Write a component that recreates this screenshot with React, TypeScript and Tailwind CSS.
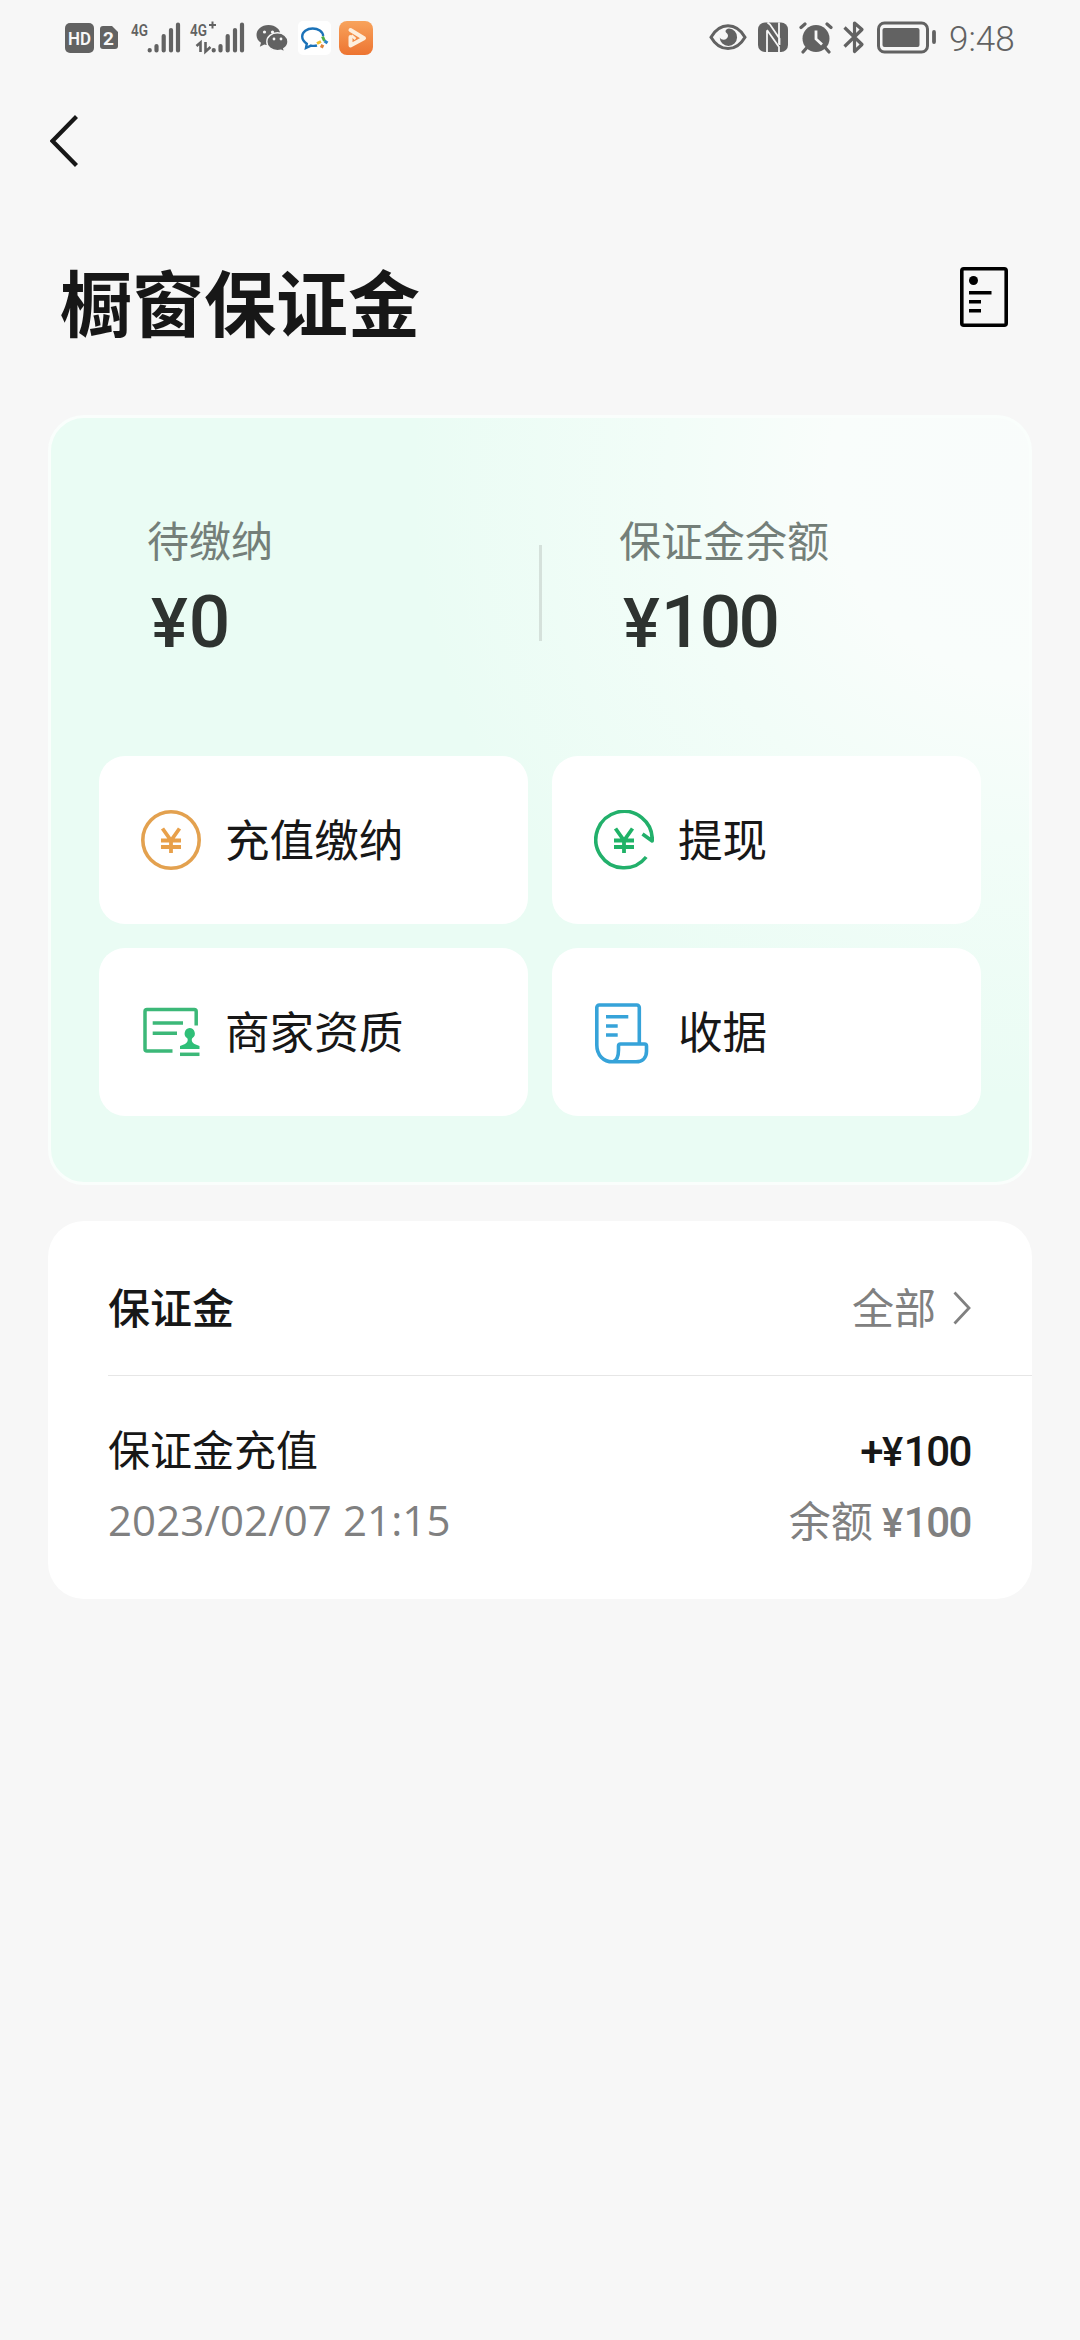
import type { ReactNode } from "react";

type Action = {
  label: string;
  icon: ReactNode;
};

function YuanMark({ color }: { color: string }) {
  return (
    <path
      d="M21.5 18.5 30 30.5 38.5 18.5M20 30.5h20M20 37h20M30 30v13"
      stroke={color}
      strokeWidth="3.8"
    />
  );
}

function RechargeIcon() {
  return (
    <svg className="h-[60px] w-[60px]" viewBox="0 0 60 60" fill="none">
      <circle cx="30" cy="30" r="28.2" stroke="#e3a14f" strokeWidth="3.6" />
      <YuanMark color="#e8a04a" />
    </svg>
  );
}

function WithdrawIcon() {
  return (
    <svg className="h-[60px] w-[60px]" viewBox="0 0 60 60" fill="none">
      <path
        d="M52.2 47A28.2 28.2 0 1 1 58.2 31L48.5 24"
        stroke="#22b06b"
        strokeWidth="3.6"
        strokeLinejoin="round"
      />
      <YuanMark color="#1fb267" />
    </svg>
  );
}

function LicenseIcon() {
  return (
    <svg className="h-[60px] w-[60px]" viewBox="0 0 60 60" fill="none" stroke="#3cb878" strokeWidth="3.5">
      <path d="M55.2 23.5V9.5a2 2 0 0 0-2-2H6a2 2 0 0 0-2 2V47a2 2 0 0 0 2 2h25.5" />
      <path d="M11.7 21H42M11.7 31.3H36" />
      <path
        d="M48.5 26a5.5 5.5 0 0 1 3 10c-1.3 1-1 4.5 2 6l5 2v3H39v-3l5-2c3-1.5 3.3-5 2-6a5.5 5.5 0 0 1 2.5-10Z"
        fill="#2fbf78"
        stroke="none"
      />
      <path d="M39 52.3h19.5" />
    </svg>
  );
}

function ReceiptIcon() {
  return (
    <svg className="h-[60px] w-[60px] overflow-visible" viewBox="0 0 60 60" fill="none" stroke="#36a3d9" strokeWidth="3.6">
      <path d="M45.3 42V5.5a2.5 2.5 0 0 0-2.5-2.5H5.3a2.5 2.5 0 0 0-2.5 2.5V43c0 10 6.5 16.8 16 16.8H42c6.5 0 10.5-4 10.5-10.5V44a2 2 0 0 0-2-2H26.5a2 2 0 0 0-2 2v4c0 6-1.5 10-5 11.5" />
      <path d="M12 14.7h22.3M12 24h11.7M12 33h11.7" />
    </svg>
  );
}

const ACTIONS: Action[] = [
  { label: "充值缴纳", icon: <RechargeIcon /> },
  { label: "提现", icon: <WithdrawIcon /> },
  { label: "商家资质", icon: <LicenseIcon /> },
  { label: "收据", icon: <ReceiptIcon /> },
];

// five rounded bars, 33x34 box
function SignalBars() {
  return (
    <path
      d="M2.2 29.5v-.5M9 29.5v-4.5M16.2 29.5V15M23.5 29.5V9M30.5 29.5V3.5"
      stroke="#626262"
      strokeWidth="4.2"
      strokeLinecap="round"
    />
  );
}

function StatusBar() {
  return (
    <div className="flex h-[76px] items-start pt-[21px] pl-[65px] text-[#626262]">
      <svg className="h-[34px] w-[29px]" viewBox="0 0 29 34">
        <rect y="2" width="29" height="30" rx="5" fill="#626262" />
        <text x="14.5" y="23.5" fontSize="19" fontWeight="600" fill="#f7f7f7" textAnchor="middle" textLength="23" lengthAdjust="spacingAndGlyphs" fontFamily="Roboto, sans-serif">HD</text>
      </svg>
      <svg className="ml-[6px] h-[34px] w-[18px]" viewBox="0 0 18 34">
        <path d="M3 5h9l6 6v14a3 3 0 0 1-3 3H3a3 3 0 0 1-3-3V8a3 3 0 0 1 3-3Z" fill="#626262" />
        <text x="8.5" y="23.5" fontSize="19" fontWeight="700" fill="#f7f7f7" textAnchor="middle" fontFamily="Roboto, sans-serif">2</text>
      </svg>
      <svg className="ml-[11px] h-[34px] w-[51px] overflow-visible" viewBox="-2 0 51 34">
        <text x="0" y="14.5" fontSize="17" fontWeight="600" fill="#626262" textLength="17" lengthAdjust="spacingAndGlyphs" fontFamily="Roboto, sans-serif">4G</text>
        <g transform="translate(16.5 0)"><SignalBars /></g>
      </svg>
      <svg className="ml-[8px] h-[34px] w-[57px] overflow-visible" viewBox="-2 0 57 34">
        <text x="0" y="14.5" fontSize="17" fontWeight="600" fill="#626262" textLength="17" lengthAdjust="spacingAndGlyphs" fontFamily="Roboto, sans-serif">4G</text>
        <path d="M19 4h7M22.5.5v7" stroke="#626262" strokeWidth="2" />
        <path d="M6.5 25l4-3.5v9.5M15.5 21v9.5l5-4.5" fill="none" stroke="#626262" strokeWidth="2.6" />
        <g transform="translate(21.5 0)"><SignalBars /></g>
      </svg>
      <svg className="ml-[11px] h-[34px] w-[33px]" viewBox="0 0 33 34">
        <path d="M12.5 4C5.5 4 .5 8.5.5 14c0 3.2 1.7 6 4.5 7.8l-1.2 4 4.5-2.3c1.3.4 2.8.6 4.2.6 7 0 12-4.5 12-10.1S19.5 4 12.5 4Z" fill="#626262" />
        <path d="M21.5 11.8c-6 0-10.7 3.9-10.7 8.9s4.7 9 10.7 9c1.2 0 2.5-.2 3.6-.5l3.7 1.9-1-3.4c2.6-1.7 4.2-4.2 4.2-7 0-5-4.6-8.9-10.5-8.9Z" fill="#626262" stroke="#f7f7f7" strokeWidth="1.4" />
        <g fill="#f7f7f7">
          <circle cx="8.5" cy="11" r="1.6" />
          <circle cx="16.5" cy="11" r="1.6" />
          <circle cx="18" cy="18" r="1.4" />
          <circle cx="25" cy="18" r="1.4" />
        </g>
      </svg>
      <svg className="ml-[9px] h-[34px] w-[33px]" viewBox="0 0 33 34" fill="none">
        <rect width="33" height="34" rx="5" fill="#fff" />
        <path d="M19 24.5c-1.5.4-3.8.6-6 .1L8 27l.8-4.2C6 20.8 4.2 18.5 4.2 15.5 4.2 10.8 9 7.5 14.7 7.5c5.5 0 10 3 10.5 7.5" stroke="#1b72b8" strokeWidth="2.4" />
        <path d="M24.5 15.5l2 4.5" stroke="#4fae48" strokeWidth="3" />
        <path d="M26.5 20l3 2" stroke="#2a83c8" strokeWidth="3.2" />
        <path d="M25.5 26l-2.8-1.5" stroke="#e0823a" strokeWidth="3.2" />
        <path d="M19 22.5l4-2" stroke="#f0c030" strokeWidth="3" />
      </svg>
      <svg className="ml-[8px] h-[34px] w-[34px]" viewBox="0 0 34 34" fill="none">
        <defs>
          <linearGradient id="video" x1="0" y1="0" x2="0" y2="1">
            <stop offset="0" stopColor="#f8a35c" />
            <stop offset="1" stopColor="#ed7431" />
          </linearGradient>
        </defs>
        <rect width="34" height="34" rx="8" fill="url(#video)" />
        <path d="M11.5 16v8.5L25 17.2 11.5 9" stroke="#fdeedd" strokeWidth="4" strokeLinejoin="round" strokeLinecap="round" />
        <path d="M12.5 14.5l4 3.5" stroke="#fdeedd" strokeWidth="2.5" />
      </svg>

      <svg className="ml-[336px] h-[34px] w-[38px]" viewBox="0 0 38 34" fill="none">
        <path d="M2 16.2C6.5 8.5 12.5 4.8 19 4.8s12.5 3.7 17 11.4c-4.5 7.7-10.5 11.4-17 11.4S6.500 23.900 2 16.200Z" stroke="#626262" strokeWidth="3" />
        <path d="M20 7.5a8.7 8.7 0 1 1-9.3 9c1.500 2.500 5 3 7 1 1-1 1.500-2.300 1.200-3.500-.5-2-2.300-2.200-2.400-3.700 0-1.300 1.500-2.600 3.500-2.800Z" fill="#626262" />
      </svg>
      <svg className="ml-[11px] h-[34px] w-[30px]" viewBox="0 0 30 34" fill="none">
        <rect y="1.5" width="30" height="29.5" rx="7" fill="#626262" />
        <path d="M9 31V9.5M9.5 1.5l2.5 2 9.5 14V24M21 23V1.5M9 9l12 17v5" stroke="#f7f7f7" strokeWidth="1.8" />
      </svg>
      <svg className="ml-[11px] h-[34px] w-[34px]" viewBox="0 0 34 34" fill="none">
        <circle cx="17" cy="17.5" r="13.5" fill="#626262" />
        <path d="M2 6.5 6 3M32 6.5 28 3M7.5 27 4 31M26.5 27l3.5 4" stroke="#626262" strokeWidth="3.2" strokeLinecap="round" />
        <path d="M17 9.5V18l6 5.5" stroke="#f7f7f7" strokeWidth="2.8" />
      </svg>
      <svg className="ml-[10px] h-[34px] w-[22px]" viewBox="0 0 22 34" fill="none">
        <path d="M1.5 6.5 19 23.5l-7.5 7V2l7.5 6.5L1.5 25.5" stroke="#626262" strokeWidth="3.2" strokeLinejoin="round" />
      </svg>
      <svg className="ml-[12px] h-[34px] w-[60px]" viewBox="0 0 60 34" fill="none">
        <rect x="1.5" y="2" width="49" height="29" rx="6" stroke="#626262" strokeWidth="3" />
        <rect x="5.5" y="7" width="37" height="19" rx="2" fill="#626262" />
        <path d="M57 11v10" stroke="#626262" strokeWidth="3.8" strokeLinecap="round" />
      </svg>
      <span className="ml-[12px] pt-px font-[Roboto] text-[35px] leading-[36px] font-[350]">9:48</span>
    </div>
  );
}

function Money({ value, sign = "" }: { value: number; sign?: string }) {
  return (
    <span className="font-[Roboto] font-[550] tracking-[-0.035em]">
      {sign}
      <span className="mr-[0.05em] text-[0.95em]">¥</span>
      {value}
    </span>
  );
}

function Balance({ label, amount }: { label: string; amount: number }) {
  return (
    <div className="pl-[48px]">
      <div className="text-[42px] leading-[60px] text-[#747f79]">{label}</div>
      <div className="mt-[4px] pl-[4px] text-[73px] leading-[84px] text-[#2e3330]">
        <Money value={amount} />
      </div>
    </div>
  );
}

export default function App() {
  return (
    <main className="min-h-[2340px] w-[1080px] bg-[#f7f7f7] font-['Noto_Sans_CJK_SC',sans-serif] text-[#171717]">
      <StatusBar />

      <nav className="flex h-[130px] items-center pl-[50px]">
        <svg className="h-[52px] w-[28px]" viewBox="0 0 28 52" fill="none">
          <path d="M26.5 1.5 2.5 26l24 24.5" stroke="#171717" strokeWidth="4.2" />
        </svg>
      </nav>

      <header className="flex h-[209px] justify-between pt-[44px] pr-[72px] pl-[60px]">
        <h1 className="text-[72px] leading-[100px] font-bold">橱窗保证金</h1>
        <svg className="mt-[17px] h-[60px] w-[48px]" viewBox="0 0 48 60" fill="none" stroke="#000">
          <rect x="1.8" y="1.8" width="44.4" height="56.4" rx="2" strokeWidth="3.6" />
          <circle cx="13.5" cy="13.5" r="4.5" fill="#000" stroke="none" />
          <path d="M9 25.8h22.5M9 34.8h12M9 43.7h12" strokeWidth="3.6" />
        </svg>
      </header>

      <section className="mx-[48px] h-[770px] rounded-[36px] border-[3px] border-[#fafefc] bg-[#eafcf4] bg-[radial-gradient(circle_at_100%_8%,#f9fcfb_0,#f9fdfb_200px,#f2fdf8_360px,rgba(240,253,247,0)_620px)] px-[48px]">
        <div className="flex h-[338px] pt-[91px]">
          <div className="w-[440px]">
            <Balance label="待缴纳" amount={0} />
          </div>
          <div className="mt-[36px] h-[96px] w-[3px] bg-[#d5e1db]" />
          <div className="pl-[29px]">
            <Balance label="保证金余额" amount={100} />
          </div>
        </div>
        <div className="grid grid-cols-2 gap-[24px]">
          {ACTIONS.map(({ label, icon }) => (
            <button key={label} className="flex h-[168px] items-center gap-[24px] rounded-[26px] bg-white pl-[42px] text-[44.6px]">
              {icon}
              <span className="pb-[4px]">{label}</span>
            </button>
          ))}
        </div>
      </section>

      <section className="mx-[48px] mt-[36px] h-[378px] rounded-[36px] bg-white pl-[60px] text-[42px] leading-[60px]">
        <div className="flex h-[155px] items-center justify-between border-b border-[#e6e6e6] pt-[20px] pr-[61px]">
          <h2 className="pb-[4px] font-medium">保证金</h2>
          <div className="flex items-center text-[#808080]">
            <span className="pb-[4px]">全部</span>
            <svg className="ml-[17px] h-[34px] w-[18px]" viewBox="0 0 18 34" fill="none">
              <path d="M1.5 1.5 16 17 1.5 32.5" stroke="#808080" strokeWidth="2.8" />
            </svg>
          </div>
        </div>
        <div className="flex justify-between pt-[42px] pr-[61px]">
          <div>
            <div>保证金充值</div>
            <div className="mt-[12px] font-[Open_Sans] tracking-[0.1px] text-[#808080]">2023/02/07 21:15</div>
          </div>
          <div className="text-right">
            <div>
              <Money value={100} sign="+" />
            </div>
            <div className="mt-[6px] text-[#808080]">
              余额 <Money value={100} />
            </div>
          </div>
        </div>
      </section>
    </main>
  );
}
